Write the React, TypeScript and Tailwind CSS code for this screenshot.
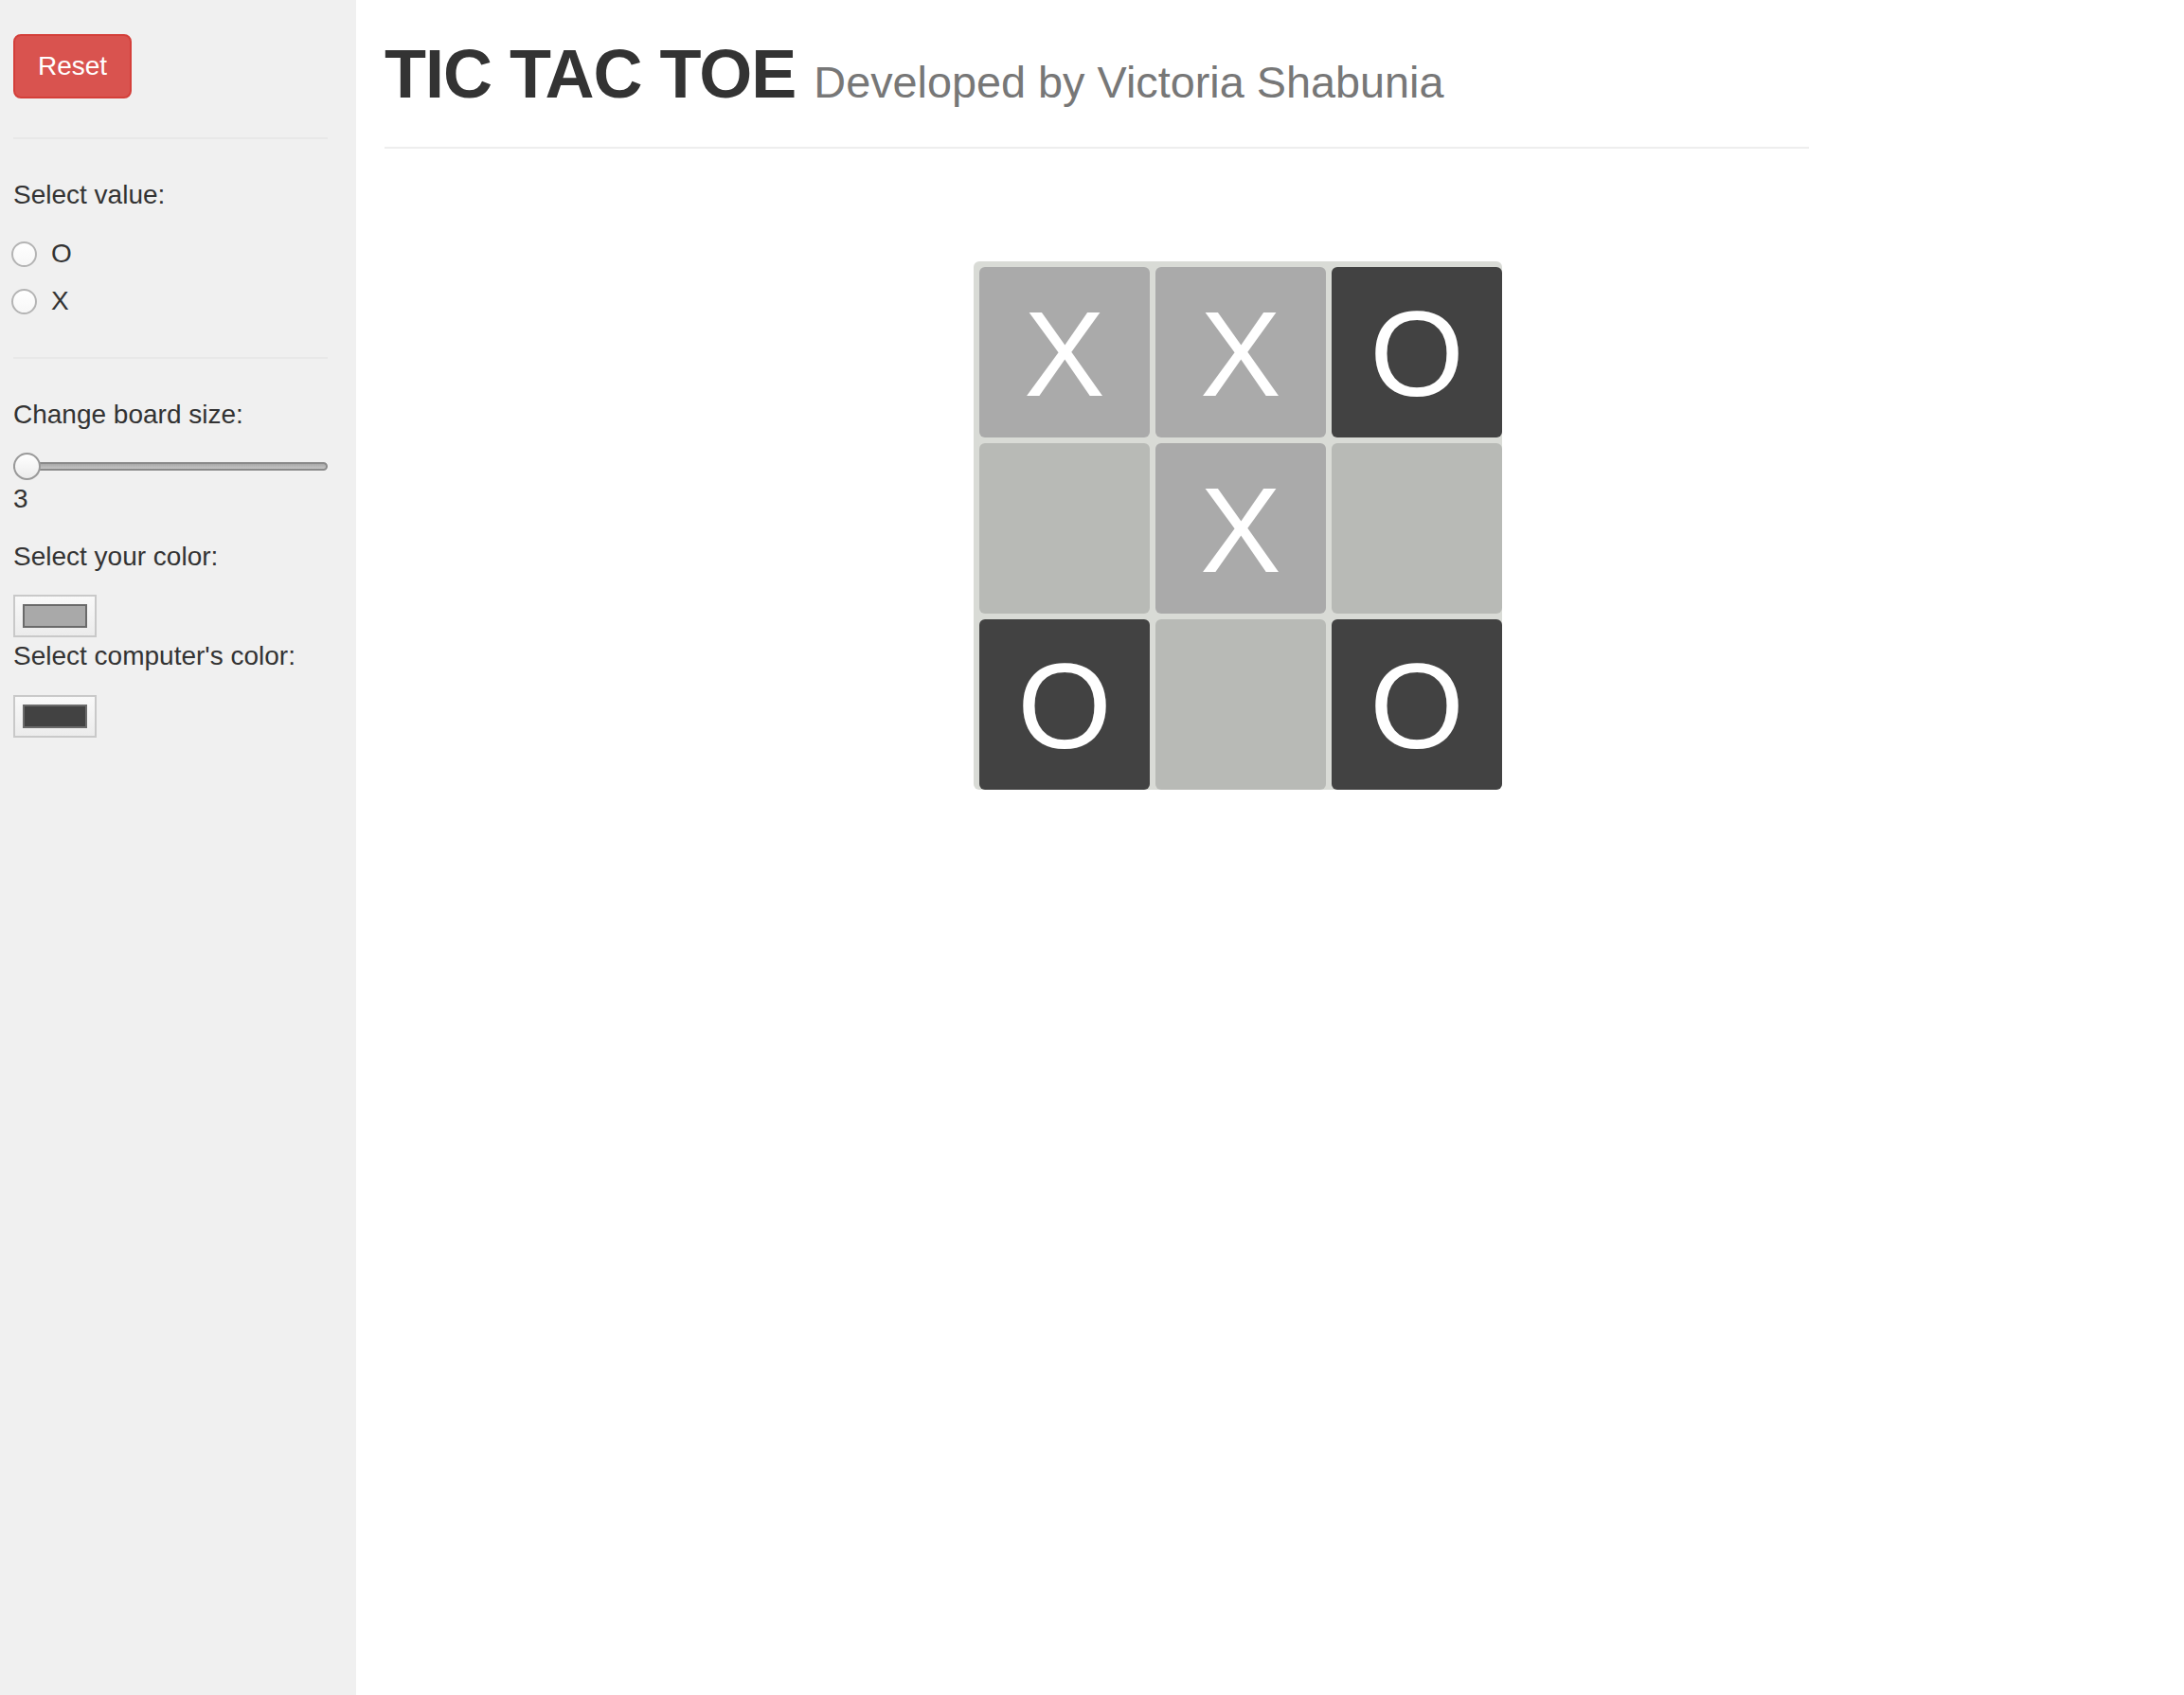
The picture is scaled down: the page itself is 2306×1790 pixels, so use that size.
import { useState } from 'react';

type Mark = 'X' | 'O' | '';

const font = { fontFamily: '"Liberation Sans", Arial, sans-serif' };

const initialBoard: Mark[] = ['X', 'X', 'O', '', 'X', '', 'O', '', 'O'];

function Radio({ label, checked, onSelect }: { label: string; checked: boolean; onSelect: () => void }) {
  return (
    <button type="button" onClick={onSelect} className="-ml-[2px] flex h-[40px] items-center gap-[15px] text-left">
      <span className="flex h-[27px] w-[27px] items-center justify-center rounded-full border-2 border-[#b4b4b4] bg-gradient-to-b from-white to-[#f7f7f7]">
        {checked && <span className="h-[11px] w-[11px] rounded-full bg-[#333333]" />}
      </span>
      <span className="leading-[40px]">{label}</span>
    </button>
  );
}

function Swatch({ color }: { color: string }) {
  return (
    <div className="flex h-[45px] w-[88px] items-center justify-center border-2 border-[#c9c9c9] bg-gradient-to-b from-[#f9f9f9] to-[#ececec]">
      <div className="h-[25px] w-[68px] border-2 border-[#6a6a6a]" style={{ backgroundColor: color }} />
    </div>
  );
}

export default function App() {
  const [board, setBoard] = useState<Mark[]>(initialBoard);
  const [value, setValue] = useState<Mark>('');

  return (
    <div className="flex min-h-screen bg-white text-[28px] leading-[40px] text-[#333333]" style={font}>
      <aside className="w-[376px] shrink-0 bg-[#f0f0f0] pl-[14px] pr-[30px] pt-[36px]">
        <button
          type="button"
          onClick={() => setBoard(Array(9).fill(''))}
          className="h-[68px] rounded-[8px] border-2 border-[#d43f3a] bg-[#d9534f] px-[24px] leading-[40px] text-white"
        >
          Reset
        </button>

        <div className="mt-[41px] h-[2px] bg-[#e8e8e8]" />

        <p className="mt-[39px]">Select value:</p>
        <div className="mt-[22px] flex flex-col gap-[10px]">
          <Radio label="O" checked={value === 'O'} onSelect={() => setValue('O')} />
          <Radio label="X" checked={value === 'X'} onSelect={() => setValue('X')} />
        </div>

        <div className="mt-[39px] h-[2px] bg-[#e8e8e8]" />

        <p className="mt-[39px]">Change board size:</p>
        <div className="relative mt-[20px] h-[29px]">
          <div className="absolute left-0 right-0 top-[10px] h-[9px] rounded-full border-2 border-[#8a8a8a] bg-gradient-to-b from-[#a9a9a9] to-[#c4c4c4]" />
          <div className="absolute left-0 top-0 h-[29px] w-[29px] rounded-full border-2 border-[#9a9a9a] bg-gradient-to-b from-white to-[#ececec]" />
        </div>
        <p>3</p>

        <p className="mt-[21px]">Select your color:</p>
        <div className="mt-[20px]">
          <Swatch color="#a9a9a9" />
        </div>
        <p>Select computer's color:</p>
        <div className="mt-[21px]">
          <Swatch color="#424242" />
        </div>
      </aside>

      <main className="flex-1 pl-[30px] pt-[39px]">
        <div className="w-[1504px] border-b-2 border-[#eeeeee] pb-[37px]">
          <h1 className="h-[79px] text-[72px] font-semibold leading-[79px] tracking-[-1px] text-[#333333]">
            TIC TAC TOE{' '}
            <small className="text-[46.8px] font-normal leading-none tracking-normal text-[#777777]">
              Developed by Victoria Shabunia
            </small>
          </h1>
        </div>

        <div className="ml-[622px] mt-[119px] inline-grid grid-cols-[repeat(3,180px)] gap-[6px] rounded-[6px] bg-[#d9dbd6] pl-[6px] pt-[6px]">
          {board.map((cell, i) => (
            <div
              key={i}
              className={`flex h-[180px] w-[180px] items-center justify-center rounded-[6px] pt-[4px] text-[128px] leading-none text-white ${
                cell === 'X' ? 'bg-[#aaaaaa]' : cell === 'O' ? 'bg-[#424242]' : 'bg-[#b8bab6]'
              }`}
            >
              {cell}
            </div>
          ))}
        </div>
      </main>
    </div>
  );
}
